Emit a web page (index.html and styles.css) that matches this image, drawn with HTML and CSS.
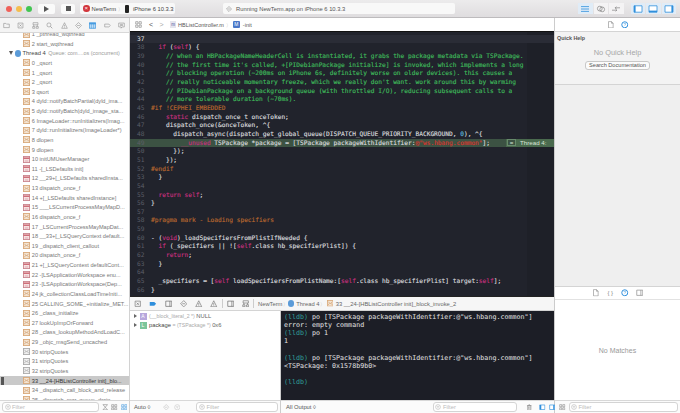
FILE: index.html
```html
<!DOCTYPE html>
<html lang="en">
<head>
    <meta charset="UTF-8">
    <title>Xcode</title>
    <link rel="stylesheet" href="styles.css">
</head>
<body>

<svg class="sprite" width="0" height="0">
    <symbol id="i-frame" viewBox="0 0 8 8"><rect x=".5" y=".5" width="7" height="7" fill="#f3e3d0" stroke="#d9a878"/><path d="M1.5 2l2.5 2.5L6.5 2M1.5 6l1.5-2M6.5 6L5 4" fill="none" stroke="#c98f5c" stroke-width=".7"/></symbol>
    <symbol id="i-rose" viewBox="0 0 8 8"><rect x=".5" y=".5" width="7" height="7" fill="#f8e6e6" stroke="#c9838c"/><path d="M.5 2.5h7" stroke="#c9606c" stroke-width="1.6"/><path d="M2 5h4M2 6.5h4" stroke="#d9a0a6" stroke-width=".6"/></symbol>
    <symbol id="i-gray" viewBox="0 0 8 8"><rect x=".5" y=".5" width="7" height="7" fill="#efefef" stroke="#aaa"/><path d="M1.5 2l2.5 2.5L6.5 2M1.5 6l1.5-2M6.5 6L5 4" fill="none" stroke="#999" stroke-width=".7"/></symbol>
    <symbol id="i-folder" viewBox="0 0 10 10"><path d="M1 8V2h3l1 1h4v5z" fill="none" stroke="currentColor" stroke-width=".8"/></symbol>
    <symbol id="i-boxx" viewBox="0 0 10 10"><path d="M1.5 1.5h7v7h-7zM3.5 3.5l3 3M6.5 3.5l-3 3" fill="none" stroke="currentColor" stroke-width=".8"/></symbol>
    <symbol id="i-tree" viewBox="0 0 10 10"><path d="M1.5 1h7v3h-7zM1 6.5h3V9H1zM6 6.5h3V9H6zM2.5 4v2.5M7.5 4v2.5" fill="none" stroke="currentColor" stroke-width=".8"/></symbol>
    <symbol id="i-search" viewBox="0 0 10 10"><circle cx="4.2" cy="4.2" r="2.9" fill="none" stroke="currentColor" stroke-width=".8"/><path d="M6.4 6.4L9 9" stroke="currentColor"/></symbol>
    <symbol id="i-warn" viewBox="0 0 10 10"><path d="M5 1l4 8H1zM5 4v2.5M5 7.2v.8" fill="none" stroke="currentColor" stroke-width=".8"/></symbol>
    <symbol id="i-diamond" viewBox="0 0 10 10"><path d="M5 .8L9.2 5 5 9.2.8 5zM3 5h4" fill="none" stroke="currentColor" stroke-width=".8"/></symbol>
    <symbol id="i-list" viewBox="0 0 10 10"><path d="M.5 1h9v8h-9z" fill="#bcdcf5" stroke="#2f8fdc"/><path d="M.5 2.5h9" stroke="#2f8fdc" stroke-width="1.6"/><path d="M3.5 3v6M6.5 3v6" stroke="#2f8fdc" stroke-width=".6"/></symbol>
    <symbol id="i-tag" viewBox="0 0 10 10"><path d="M1 2.5h6L9.5 5 7 7.5H1z" fill="currentColor"/></symbol>
    <symbol id="i-tago" viewBox="0 0 10 10"><path d="M1 3h6l2 2-2 2H1z" fill="none" stroke="currentColor" stroke-width=".8"/></symbol>
    <symbol id="i-bubble" viewBox="0 0 10 10"><path d="M1 1.5h8v5.5H6L4.5 8.8V7H1zM3 3.5h4M3 5h4" fill="none" stroke="currentColor" stroke-width=".8"/></symbol>
    <symbol id="i-grid" viewBox="0 0 10 10"><path d="M1 1h3.2v3.2H1zM5.8 1H9v3.2H5.8zM1 5.8h3.2V9H1zM5.8 5.8H9V9H5.8z" fill="none" stroke="currentColor" stroke-width=".8"/></symbol>
    <symbol id="i-file" viewBox="0 0 10 10"><path d="M2 .8h4L8.2 3v6.2H2zM6 .8V3h2.2" fill="none" stroke="currentColor" stroke-width=".8"/></symbol>
    <symbol id="i-help" viewBox="0 0 10 10"><circle cx="5" cy="5" r="4" fill="none" stroke="#2f8fdc" stroke-width="1.3"/><path d="M3.8 4c0-1.5 2.4-1.5 2.4 0 0 1-1.2 1-1.2 2" fill="none" stroke="#2f8fdc" stroke-width=".7"/></symbol>
    <symbol id="i-filter" viewBox="0 0 10 10"><circle cx="5" cy="5" r="4" fill="none" stroke="currentColor" stroke-width=".7"/><path d="M3 4h4M3.8 5.4h2.4M4.6 6.8h.8" stroke="currentColor" stroke-width=".6"/></symbol>
    <symbol id="i-hourglass" viewBox="0 0 10 10"><path d="M1.5 1h7L5 5l3.5 4h-7L5 5z" fill="none" stroke="currentColor" stroke-width=".8"/></symbol>
    <symbol id="i-trash" viewBox="0 0 10 10"><path d="M2.5 2.5h5V9h-5zM1.5 2.5h7M4 1h2M4 4v3.5M6 4v3.5" fill="none" stroke="currentColor" stroke-width=".8"/></symbol>
    <symbol id="i-book" viewBox="0 0 10 10"><path d="M1 1.5h8v7H1zM6.5 1.5v7" fill="none" stroke="currentColor" stroke-width=".9"/></symbol>
    <symbol id="i-pane-l" viewBox="0 0 10 10"><path d="M1 1.5h8v7H1z" fill="#fff" stroke="currentColor"/><path d="M2.5 1.5v7" stroke="currentColor" stroke-width="2"/></symbol>
    <symbol id="i-pane-r" viewBox="0 0 10 10"><path d="M1 1.5h8v7H1z" fill="#fff" stroke="currentColor"/><path d="M7.5 1.5v7" stroke="currentColor" stroke-width="2"/></symbol>
</svg>

<header class="toolbar">
    <div class="lights">
        <span class="light red"></span>
        <span class="light yellow"></span>
        <span class="light green"></span>
    </div>
    <button class="tool-btn play"><span class="tri"></span></button>
    <button class="tool-btn stop"><span class="sq"></span></button>
    <div class="scheme">
        <span class="scheme-icon">×</span>
        <span>NewTerm</span>
        <span class="chev">〉</span>
        <span class="phone"></span>
        <span>iPhone 6 10.3.3</span>
    </div>
    <div class="status">
        <svg class="status-icon"><use href="#i-diamond"/></svg>
        <span>Running NewTerm.app on iPhone 6 10.3.3</span>
    </div>
    <div class="segs">
        <span class="seg on"><svg viewBox="0 0 12 10"><path d="M1 2h10M1 5h10M1 8h10" stroke="#2f8fdc"/></svg></span>
        <span class="seg"><svg viewBox="0 0 12 10"><circle cx="4.5" cy="4.5" r="3" fill="none" stroke="#777" stroke-width=".8"/><circle cx="7.5" cy="5.5" r="3" fill="none" stroke="#777" stroke-width=".8"/></svg></span>
        <span class="seg"><svg viewBox="0 0 12 10"><path d="M1 6.5h6M5.5 5L7 6.5 5.5 8M11 3.5H5M6.5 2L5 3.5 6.5 5" fill="none" stroke="#777" stroke-width=".8"/></svg></span>
    </div>
    <div class="segs views">
        <span class="seg on"><svg viewBox="0 0 12 10"><path d="M1 1h10v8H1z" fill="#fff" stroke="#2f8fdc"/><path d="M2 1v8" stroke="#2f8fdc" stroke-width="2"/></svg></span>
        <span class="seg on"><svg viewBox="0 0 12 10"><path d="M1 1h10v8H1z" fill="#fff" stroke="#2f8fdc"/><path d="M1 8h10" stroke="#2f8fdc" stroke-width="2"/></svg></span>
        <span class="seg on"><svg viewBox="0 0 12 10"><path d="M1 1h10v8H1z" fill="#fff" stroke="#2f8fdc"/><path d="M10 1v8" stroke="#2f8fdc" stroke-width="2"/></svg></span>
    </div>
</header>

<div class="main">

    <aside class="navigator">
        <div class="nav-tabs">
            <svg><use href="#i-folder"/></svg>
            <svg><use href="#i-boxx"/></svg>
            <svg><use href="#i-tree"/></svg>
            <svg><use href="#i-search"/></svg>
            <svg><use href="#i-warn"/></svg>
            <svg><use href="#i-diamond"/></svg>
            <svg><use href="#i-list"/></svg>
            <svg><use href="#i-tago"/></svg>
            <svg><use href="#i-bubble"/></svg>
        </div>
        <div class="stack">
            <div class="stack-inner">
                <div class="frame"><svg><use href="#i-frame"/></svg><span>1 _pthread_wqthread</span></div>
                <div class="frame"><svg><use href="#i-frame"/></svg><span>2 start_wqthread</span></div>
                <div class="thread"><span class="disc"></span><span class="dot"></span><span class="thread-name">Thread 4</span><span class="thread-queue">Queue: com....os (concurrent)</span></div>
                <div class="frame"><svg><use href="#i-frame"/></svg><span>0 _qsort</span></div>
                <div class="frame"><svg><use href="#i-frame"/></svg><span>1 _qsort</span></div>
                <div class="frame"><svg><use href="#i-frame"/></svg><span>2 _qsort</span></div>
                <div class="frame"><svg><use href="#i-frame"/></svg><span>3 qsort</span></div>
                <div class="frame"><svg><use href="#i-frame"/></svg><span>4 dyld::notifyBatchPartial(dyld_ima...</span></div>
                <div class="frame"><svg><use href="#i-frame"/></svg><span>5 dyld::notifyBatch(dyld_image_sta...</span></div>
                <div class="frame"><svg><use href="#i-frame"/></svg><span>6 ImageLoader::runInitializers(Imag...</span></div>
                <div class="frame"><svg><use href="#i-frame"/></svg><span>7 dyld::runInitializers(ImageLoader*)</span></div>
                <div class="frame"><svg><use href="#i-frame"/></svg><span>8 dlopen</span></div>
                <div class="frame"><svg><use href="#i-frame"/></svg><span>9 dlopen</span></div>
                <div class="frame"><svg><use href="#i-rose"/></svg><span>10 initUMUserManager</span></div>
                <div class="frame"><svg><use href="#i-rose"/></svg><span>11 -[_LSDefaults init]</span></div>
                <div class="frame"><svg><use href="#i-rose"/></svg><span>12 __29+[_LSDefaults sharedInsta...</span></div>
                <div class="frame"><svg><use href="#i-frame"/></svg><span>13 dispatch_once_f</span></div>
                <div class="frame"><svg><use href="#i-rose"/></svg><span>14 +[_LSDefaults sharedInstance]</span></div>
                <div class="frame"><svg><use href="#i-rose"/></svg><span>15 ___LSCurrentProcessMayMapD...</span></div>
                <div class="frame"><svg><use href="#i-frame"/></svg><span>16 dispatch_once_f</span></div>
                <div class="frame"><svg><use href="#i-rose"/></svg><span>17 _LSCurrentProcessMayMapDat...</span></div>
                <div class="frame"><svg><use href="#i-rose"/></svg><span>18 __33+[_LSQueryContext default...</span></div>
                <div class="frame"><svg><use href="#i-frame"/></svg><span>19 _dispatch_client_callout</span></div>
                <div class="frame"><svg><use href="#i-frame"/></svg><span>20 dispatch_once_f</span></div>
                <div class="frame"><svg><use href="#i-rose"/></svg><span>21 +[_LSQueryContext defaultCont...</span></div>
                <div class="frame"><svg><use href="#i-rose"/></svg><span>22 -[LSApplicationWorkspace enu...</span></div>
                <div class="frame"><svg><use href="#i-rose"/></svg><span>23 -[LSApplicationWorkspace(Dep...</span></div>
                <div class="frame"><svg><use href="#i-frame"/></svg><span>24 jk_collectionClassLoadTimeIniti...</span></div>
                <div class="frame"><svg><use href="#i-frame"/></svg><span>25 CALLING_SOME_+initialize_MET...</span></div>
                <div class="frame"><svg><use href="#i-frame"/></svg><span>26 _class_initialize</span></div>
                <div class="frame"><svg><use href="#i-frame"/></svg><span>27 lookUpImpOrForward</span></div>
                <div class="frame"><svg><use href="#i-frame"/></svg><span>28 _class_lookupMethodAndLoadC...</span></div>
                <div class="frame"><svg><use href="#i-frame"/></svg><span>29 _objc_msgSend_uncached</span></div>
                <div class="frame"><svg><use href="#i-gray"/></svg><span>30 stripQuotes</span></div>
                <div class="frame"><svg><use href="#i-gray"/></svg><span>31 stripQuotes</span></div>
                <div class="frame"><svg><use href="#i-gray"/></svg><span>32 stripQuotes</span></div>
                <div class="frame selected"><span class="marker"></span><svg><use href="#i-frame"/></svg><span>33 __24-[HBListController init]_blo...</span></div>
                <div class="frame"><svg><use href="#i-frame"/></svg><span>34 _dispatch_call_block_and_release</span></div>
                <div class="frame"><svg><use href="#i-frame"/></svg><span>35 _dispatch_mgr_queue_drain</span></div>
            </div>
        </div>
        <div class="bottom-bar nav-bottom">
            <div class="filter"><svg><use href="#i-filter"/></svg><span>Filter</span></div>
            <svg class="bar-icon"><use href="#i-hourglass"/></svg>
            <svg class="bar-icon"><use href="#i-grid"/></svg>
            <svg class="bar-icon blue"><use href="#i-grid"/></svg>
        </div>
    </aside>

    <section class="center">
        <div class="jumpbar">
            <svg class="jump-grid"><use href="#i-grid"/></svg>
            <span class="jump-arrow">&lt;</span>
            <span class="jump-arrow dim">&gt;</span>
            <span class="file-icon">m</span>
            <span>HBListController.m</span>
            <span class="chev">〉</span>
            <span class="method-icon">M</span>
            <span>-init</span>
        </div>

        <div class="code">
            <div class="row current"><span class="ln">37</span><span class="src"></span></div>
            <div class="row"><span class="ln">38</span><span class="src">  <b class="kw">if</b> (<b class="kw">self</b>) {</span></div>
            <div class="row"><span class="ln">39</span><span class="src cm">    // when an HBPackageNameHeaderCell is instantiated, it grabs the package metadata via TSPackage.</span></div>
            <div class="row"><span class="ln">40</span><span class="src cm">    // the first time it's called, +[PIDebianPackage initialize] is invoked, which implements a long</span></div>
            <div class="row"><span class="ln">41</span><span class="src cm">    // blocking operation (~200ms on iPhone 6s, definitely worse on older devices). this causes a</span></div>
            <div class="row"><span class="ln">42</span><span class="src cm">    // really noticeable momentary freeze, which we really don't want. work around this by warming</span></div>
            <div class="row"><span class="ln">43</span><span class="src cm">    // PIDebianPackage on a background queue (with throttled I/O), reducing subsequent calls to a</span></div>
            <div class="row"><span class="ln">44</span><span class="src cm">    // more tolerable duration (~70ms).</span></div>
            <div class="row"><span class="ln">45</span><span class="src pp">#if !CEPHEI_EMBEDDED</span></div>
            <div class="row"><span class="ln">46</span><span class="src">    <b class="kw">static</b> dispatch_once_t onceToken;</span></div>
            <div class="row"><span class="ln">47</span><span class="src">    dispatch_once(&amp;onceToken, ^{</span></div>
            <div class="row"><span class="ln">48</span><span class="src">      dispatch_async(dispatch_get_global_queue(DISPATCH_QUEUE_PRIORITY_BACKGROUND, <b class="num">0</b>), ^{</span></div>
            <div class="row hit"><span class="ln">49</span><span class="src">        <b class="kw">__unused</b> TSPackage *package = [TSPackage packageWithIdentifier:<b class="str">@"ws.hbang.common"</b>];</span><span class="hit-badge"><span class="hit-icon">=</span>Thread 4:</span></div>
            <div class="row"><span class="ln">50</span><span class="src">      });</span></div>
            <div class="row"><span class="ln">51</span><span class="src">    });</span></div>
            <div class="row"><span class="ln">52</span><span class="src pp">#endif</span></div>
            <div class="row"><span class="ln">53</span><span class="src">  }</span></div>
            <div class="row"><span class="ln">54</span><span class="src"></span></div>
            <div class="row"><span class="ln">55</span><span class="src">  <b class="kw">return</b> <b class="kw">self</b>;</span></div>
            <div class="row"><span class="ln">56</span><span class="src">}</span></div>
            <div class="row"><span class="ln">57</span><span class="src"></span></div>
            <div class="row"><span class="ln">58</span><span class="src pp">#pragma mark - Loading specifiers</span></div>
            <div class="row"><span class="ln">59</span><span class="src"></span></div>
            <div class="row"><span class="ln">60</span><span class="src">- (<b class="kw">void</b>)_loadSpecifiersFromPlistIfNeeded {</span></div>
            <div class="row"><span class="ln">61</span><span class="src">  <b class="kw">if</b> (_specifiers || ![<b class="kw">self</b>.class hb_specifierPlist]) {</span></div>
            <div class="row"><span class="ln">62</span><span class="src">    <b class="kw">return</b>;</span></div>
            <div class="row"><span class="ln">63</span><span class="src">  }</span></div>
            <div class="row"><span class="ln">64</span><span class="src"></span></div>
            <div class="row"><span class="ln">65</span><span class="src">  _specifiers = [<b class="kw">self</b> loadSpecifiersFromPlistName:[<b class="kw">self</b>.class hb_specifierPlist] target:<b class="kw">self</b>];</span></div>
            <div class="row"><span class="ln">66</span><span class="src">}</span></div>
        </div>

        <div class="debugbar">
            <svg><use href="#i-boxx"/></svg>
            <svg class="blue"><use href="#i-tag"/></svg>
            <svg><use href="#i-book"/></svg>
            <svg><use href="#i-diamond"/></svg>
            <svg><use href="#i-warn"/></svg>
            <svg><use href="#i-warn"/></svg>
            <span class="sep"></span>
            <svg><use href="#i-book"/></svg>
            <svg><use href="#i-tree"/></svg>
            <span class="sep"></span>
            <span class="crumb">NewTerm</span>
            <span class="chev">〉</span>
            <span class="dot"></span>
            <span class="crumb">Thread 4</span>
            <span class="chev">〉</span>
            <svg class="small-frame"><use href="#i-frame"/></svg>
            <span class="crumb">33 __24-[HBListController init]_block_invoke_2</span>
        </div>

        <div class="panes">
            <div class="vars">
                <div class="var-list">
                    <div class="var"><span class="tri-small"></span><span class="var-icon purple">A</span><span class="var-dim">(__block_literal_2 *)</span> NULL</div>
                    <div class="var"><span class="tri-small"></span><span class="var-icon mint">L</span><b>package</b> <span class="var-dim">= (TSPackage *)</span> 0x6</div>
                </div>
                <div class="bottom-bar">
                    <span class="auto">Auto ◊</span>
                    <svg class="bar-icon faint"><use href="#i-diamond"/></svg>
                    <svg class="bar-icon faint"><use href="#i-filter"/></svg>
                    <div class="filter"><svg><use href="#i-filter"/></svg><span>Filter</span></div>
                </div>
            </div>
            <div class="console-pane">
                <pre class="console"><i>(lldb)</i> po [TSPackage packageWithIdentifier:@"ws.hbang.common"]
error: empty command
<i>(lldb)</i> po 1
1

<i>(lldb)</i> po [TSPackage packageWithIdentifier:@"ws.hbang.common"]
&lt;TSPackage: 0x1578b9b0&gt;

<i>(lldb)</i></pre>
                <div class="bottom-bar">
                    <span class="auto output">All Output ◊</span>
                    <div class="filter"><svg><use href="#i-filter"/></svg><span>Filter</span></div>
                    <svg class="bar-icon"><use href="#i-trash"/></svg>
                    <span class="sep"></span>
                    <svg class="bar-icon blue"><use href="#i-pane-l"/></svg>
                    <svg class="bar-icon blue"><use href="#i-pane-r"/></svg>
                </div>
            </div>
        </div>
    </section>

    <aside class="inspector">
        <div class="insp-tabs">
            <svg><use href="#i-file"/></svg>
            <svg><use href="#i-help"/></svg>
        </div>
        <div class="quick-help">
            <div class="qh-title">Quick Help</div>
            <div class="qh-empty">No Quick Help</div>
            <button class="qh-btn">Search Documentation</button>
        </div>
        <div class="insp-blank"></div>
        <div class="insp-tabs lib">
            <svg><use href="#i-file"/></svg>
            <span class="braces">{ }</span>
            <svg><use href="#i-help"/></svg>
            <svg><use href="#i-book"/></svg>
        </div>
        <div class="no-match">No Matches</div>
        <div class="bottom-bar">
            <svg class="bar-icon"><use href="#i-grid"/></svg>
            <div class="filter"><svg><use href="#i-filter"/></svg><span>Filter</span></div>
        </div>
    </aside>

</div>

</body>
</html>
```

FILE: styles.css
```css
* {
    box-sizing: border-box;
}
html, body {
    margin: 0;
    height: 413px;
    overflow: hidden;
}
body {
    font-family: "Liberation Sans", Arial, sans-serif;
    font-size: 5.8px;
    color: #555;
    background: #fff;
    white-space: nowrap;
}
.sprite {
    position: absolute;
}
button {
    font-family: inherit;
    padding: 0;
}

/* top toolbar */
.toolbar {
    height: 18px;
    display: flex;
    align-items: center;
    background: linear-gradient(#ecebec, #dfdddf);
    border-bottom: 1px solid #bdbbbd;
    padding-left: 6px;
}
.lights {
    display: flex;
    gap: 3.8px;
    width: 32px;
}
.light {
    width: 6px;
    height: 6px;
    border-radius: 50%;
}
.red { background: #f0605a; }
.yellow { background: #f5bd4f; }
.green { background: #42c552; }
.tool-btn {
    height: 10px;
    border: none;
    border-radius: 2px;
    background: #fafafa;
    display: flex;
    align-items: center;
    justify-content: center;
}
.play { width: 17px; }
.stop { width: 14px; margin-left: 6px; }
.tri {
    border-left: 5px solid #555;
    border-top: 3px solid transparent;
    border-bottom: 3px solid transparent;
}
.sq {
    width: 5px;
    height: 5px;
    background: #555;
}
.scheme {
    width: 95px;
    height: 11px;
    margin-left: 5px;
    border-radius: 2px;
    background: #f8f8f8;
    display: flex;
    align-items: center;
    gap: 2px;
    padding-left: 3px;
    color: #444;
}
.scheme-icon {
    width: 6.5px;
    height: 6.5px;
    border-radius: 50%;
    background: #d2363c;
    color: #fff;
    font-size: 6px;
    line-height: 6.5px;
    text-align: center;
}
.chev {
    color: #aaa;
    font-size: 5px;
}
.phone {
    width: 4px;
    height: 8px;
    background: #222;
    border-radius: 1px;
    margin-right: 2px;
}
.status {
    width: 232px;
    height: 11px;
    margin-left: 48px;
    border-radius: 2px;
    background: #f8f8f8;
    display: flex;
    align-items: center;
    gap: 4px;
    padding-left: 3px;
    color: #555;
}
.status-icon {
    width: 6px;
    height: 6px;
    color: #777;
}
.segs {
    display: flex;
    margin-left: 123px;
    gap: 1px;
}
.views {
    margin-left: 7px;
}
.seg {
    width: 14.5px;
    height: 11px;
    background: #f4f3f4;
    display: flex;
    align-items: center;
    justify-content: center;
}
.seg.on {
    background: #e0ecf7;
}
.seg svg {
    width: 10px;
    height: 8px;
}

.main {
    display: flex;
    height: 395px;
}

/* left navigator */
.navigator {
    width: 130px;
    display: flex;
    flex-direction: column;
    border-right: 1px solid #d2d2d2;
}
.nav-tabs {
    height: 15px;
    display: flex;
    align-items: center;
    gap: 7.4px;
    padding-left: 3px;
    background: #f4f4f4;
    border-bottom: 1px solid #d8d8d8;
    color: #888;
    flex: none;
}
.nav-tabs svg {
    width: 7px;
    height: 7px;
}
.stack {
    flex: 1;
    overflow: hidden;
}
.stack-inner {
    margin-top: -3.8px;
}
.frame, .thread {
    height: 9.63px;
    display: flex;
    align-items: center;
    font-size: 5.6px;
}
.frame {
    padding-left: 23px;
    gap: 1.8px;
    color: #777;
    position: relative;
}
.frame svg {
    width: 7px;
    height: 7px;
    flex: none;
}
.selected {
    background: #c9c9c9;
    color: #333;
}
.marker {
    position: absolute;
    left: 1px;
    top: 1px;
    width: 3px;
    height: 8px;
    background: #555;
}
.thread {
    padding-left: 9px;
    gap: 1.5px;
}
.disc {
    border-top: 4px solid #555;
    border-left: 2.5px solid transparent;
    border-right: 2.5px solid transparent;
}
.dot {
    width: 6.5px;
    height: 6.5px;
    border-radius: 50%;
    background: #5b9bd8;
    flex: none;
}
.thread-name {
    color: #444;
    margin-right: 1px;
    font-size: 5.8px;
}
.thread-queue {
    color: #999;
    font-size: 5.4px;
}

/* bottom filter bars */
.bottom-bar {
    height: 13px;
    flex: none;
    display: flex;
    align-items: center;
    gap: 3px;
    background: #fbfbfb;
    border-top: 1px solid #d8d8d8;
    padding: 0 2px;
}
.filter {
    height: 10px;
    border: 1px solid #d4d4d4;
    border-radius: 3px;
    background: #fff;
    display: flex;
    align-items: center;
    gap: 1.5px;
    padding-left: 1.5px;
    color: #bbb;
    flex: 1;
}
.filter svg {
    width: 6px;
    height: 6px;
    color: #999;
}
.bar-icon {
    width: 6.5px;
    height: 6.5px;
    color: #777;
    flex: none;
}
.blue {
    color: #2f8fdc;
}
.faint {
    color: #bbb;
}

/* center column */
.center {
    width: 425px;
    display: flex;
    flex-direction: column;
    border-right: 1px solid #ccc;
}
.jumpbar {
    height: 13px;
    flex: none;
    display: flex;
    align-items: center;
    gap: 2px;
    padding-left: 5px;
    background: #fff;
    color: #555;
    font-size: 5.5px;
}
.jump-grid {
    width: 7px;
    height: 7px;
    color: #777;
    margin-right: 5px;
}
.jump-arrow {
    font-size: 7px;
    width: 8.5px;
    color: #555;
}
.dim {
    color: #aaa;
}
.file-icon {
    width: 6px;
    height: 7px;
    background: #e5e5ee;
    color: #5050a0;
    font-size: 4.5px;
    line-height: 7px;
    text-align: center;
}
.method-icon {
    width: 7px;
    height: 7px;
    background: #4a78c8;
    color: #fff;
    font-size: 5px;
    line-height: 7px;
    text-align: center;
    border-radius: 1px;
    margin-right: 1px;
}

/* source editor */
.code {
    height: 265px;
    flex: none;
    overflow: hidden;
    padding-top: 2.7px;
    background: linear-gradient(to right, #21232c 397px, #1e2028 397px);
    border-top: 1px solid #111;
    font-family: "DejaVu Sans Mono", "Liberation Mono", monospace;
    font-size: 6.2px;
    -webkit-text-stroke: 0.15px;
    color: #d6d7db;
}
.row {
    height: 8.67px;
    line-height: 8.67px;
    display: flex;
    white-space: pre;
}
.ln {
    width: 14.5px;
    flex: none;
    text-align: right;
    color: #5c5e68;
    margin-right: 6.5px;
    -webkit-text-stroke: 0;
}
.src {
    flex: 1;
}
.src b {
    font-weight: normal;
}
.current {
    background: #2a2c36;
}
.current .ln {
    color: #e8e8e8;
}
.kw { color: #c4307e; }
.cm { color: #3fb95b; }
.pp { color: #b8672f; }
.str { color: #d5362f; }
.num { color: #5ab4d8; }
.hit {
    background: #3c5243;
}
.hit-badge {
    width: 48px;
    flex: none;
    display: flex;
    align-items: center;
    gap: 4px;
    background: #4a6a4e;
    color: #d8e4d8;
    font-family: "Liberation Sans", Arial, sans-serif;
    font-size: 6.2px;
    -webkit-text-stroke: 0;
    padding-left: 1px;
}
.hit-icon {
    width: 9px;
    height: 7px;
    line-height: 6px;
    text-align: center;
    background: #3c5243;
    border: 1px solid #678a6b;
}

/* debug bar */
.debugbar {
    height: 15px;
    flex: none;
    display: flex;
    align-items: center;
    gap: 7.8px;
    padding-left: 4px;
    background: #f6f6f6;
    border-top: 1px solid #222;
    border-bottom: 1px solid #d4d4d4;
    color: #666;
}
.debugbar svg {
    width: 7.5px;
    height: 7.5px;
    flex: none;
}
.debugbar .sep {
    margin: 0 -4px;
}
.debugbar .chev {
    margin-left: -7.3px;
}
.debugbar .dot {
    margin-left: -7.8px;
}
.debugbar .dot + .crumb {
    margin-left: -6px;
}
.debugbar .chev + .small-frame {
    margin-left: -6px;
}
.debugbar .small-frame + .crumb {
    margin-left: -5.3px;
}
.debugbar .small-frame {
    width: 6.5px;
    height: 6.5px;
}
.debugbar .sep, .bottom-bar .sep {
    width: 1px;
    height: 9px;
    background: #ccc;
}

.panes {
    flex: 1;
    min-height: 0;
    display: flex;
}
.vars {
    width: 151px;
    display: flex;
    flex-direction: column;
    border-right: 1px solid #ccc;
}
.var-list {
    flex: 1;
    padding-top: 0.5px;
}
.var {
    height: 9px;
    display: flex;
    align-items: center;
    gap: 1.5px;
    padding-left: 4px;
    color: #666;
}
.var b {
    color: #444;
    font-weight: normal;
}
.var-dim {
    color: #aaa;
    font-size: 5.2px;
}
.tri-small {
    border-left: 3.5px solid #666;
    border-top: 2.2px solid transparent;
    border-bottom: 2.2px solid transparent;
    margin-right: 1px;
}
.var-icon {
    width: 7px;
    height: 7px;
    font-size: 5px;
    line-height: 7px;
    text-align: center;
    color: #fff;
    margin-right: 1px;
}
.purple { background: #b7a7dc; }
.mint { background: #7cc59a; }
.auto {
    color: #555;
    margin-left: 2px;
    margin-right: 9px;
}
.vars .bottom-bar {
    gap: 4px;
}
.vars .filter {
    flex: none;
    width: 82px;
    margin-left: 12px;
}
.console-pane {
    flex: 1;
    display: flex;
    flex-direction: column;
    min-width: 0;
}
.console {
    flex: 1;
    margin: 0;
    padding: 2px 0 0 3px;
    background: #1c1e26;
    color: #e2e2e4;
    font-family: "DejaVu Sans Mono", "Liberation Mono", monospace;
    font-size: 6.67px;
    line-height: 8.15px;
    overflow: hidden;
}
.console i {
    font-style: normal;
    color: #2f9f98;
}
.output {
    margin-right: 114px;
    margin-left: 3px;
}
.console-pane .filter {
    flex: none;
    width: 84px;
}
.console-pane .filter + .bar-icon {
    margin: 0 1px 0 6px;
}

/* right inspector */
.inspector {
    flex: 1;
    display: flex;
    flex-direction: column;
    min-width: 0;
}
.insp-tabs {
    height: 13px;
    flex: none;
    display: flex;
    align-items: center;
    justify-content: center;
    gap: 7px;
    background: #fff;
    color: #888;
}
.insp-tabs svg {
    width: 7.5px;
    height: 7.5px;
}
.quick-help {
    height: 54px;
    flex: none;
    display: flex;
    flex-direction: column;
    align-items: center;
    background: #f3f3f3;
    border-top: 1px solid #d4d4d4;
    border-bottom: 1px solid #d4d4d4;
}
.qh-title {
    align-self: flex-start;
    margin: 2.5px 0 0 2px;
    font-size: 5.4px;
    font-weight: bold;
    color: #555;
}
.qh-empty {
    margin-top: 7.5px;
    font-size: 7.4px;
    color: #a6a6a6;
}
.qh-btn {
    margin-top: 4px;
    width: 65px;
    height: 8.5px;
    border: 1px solid #c8c8c8;
    border-radius: 3px;
    background: #fbfbfb;
    font-size: 5.6px;
    line-height: 6px;
    color: #555;
}
.insp-blank {
    height: 201px;
    flex: none;
    background: #efefef;
}
.lib {
    height: 14px;
    border-top: 1px solid #d4d4d4;
    border-bottom: 1px solid #e2e2e2;
}
.braces {
    width: 7.5px;
    text-align: center;
    font-size: 6px;
    color: #888;
}
.no-match {
    flex: 1;
    display: flex;
    align-items: center;
    justify-content: center;
    font-size: 7px;
    color: #999;
}
.inspector .bottom-bar {
    gap: 3px;
    padding-left: 4px;
}
```
